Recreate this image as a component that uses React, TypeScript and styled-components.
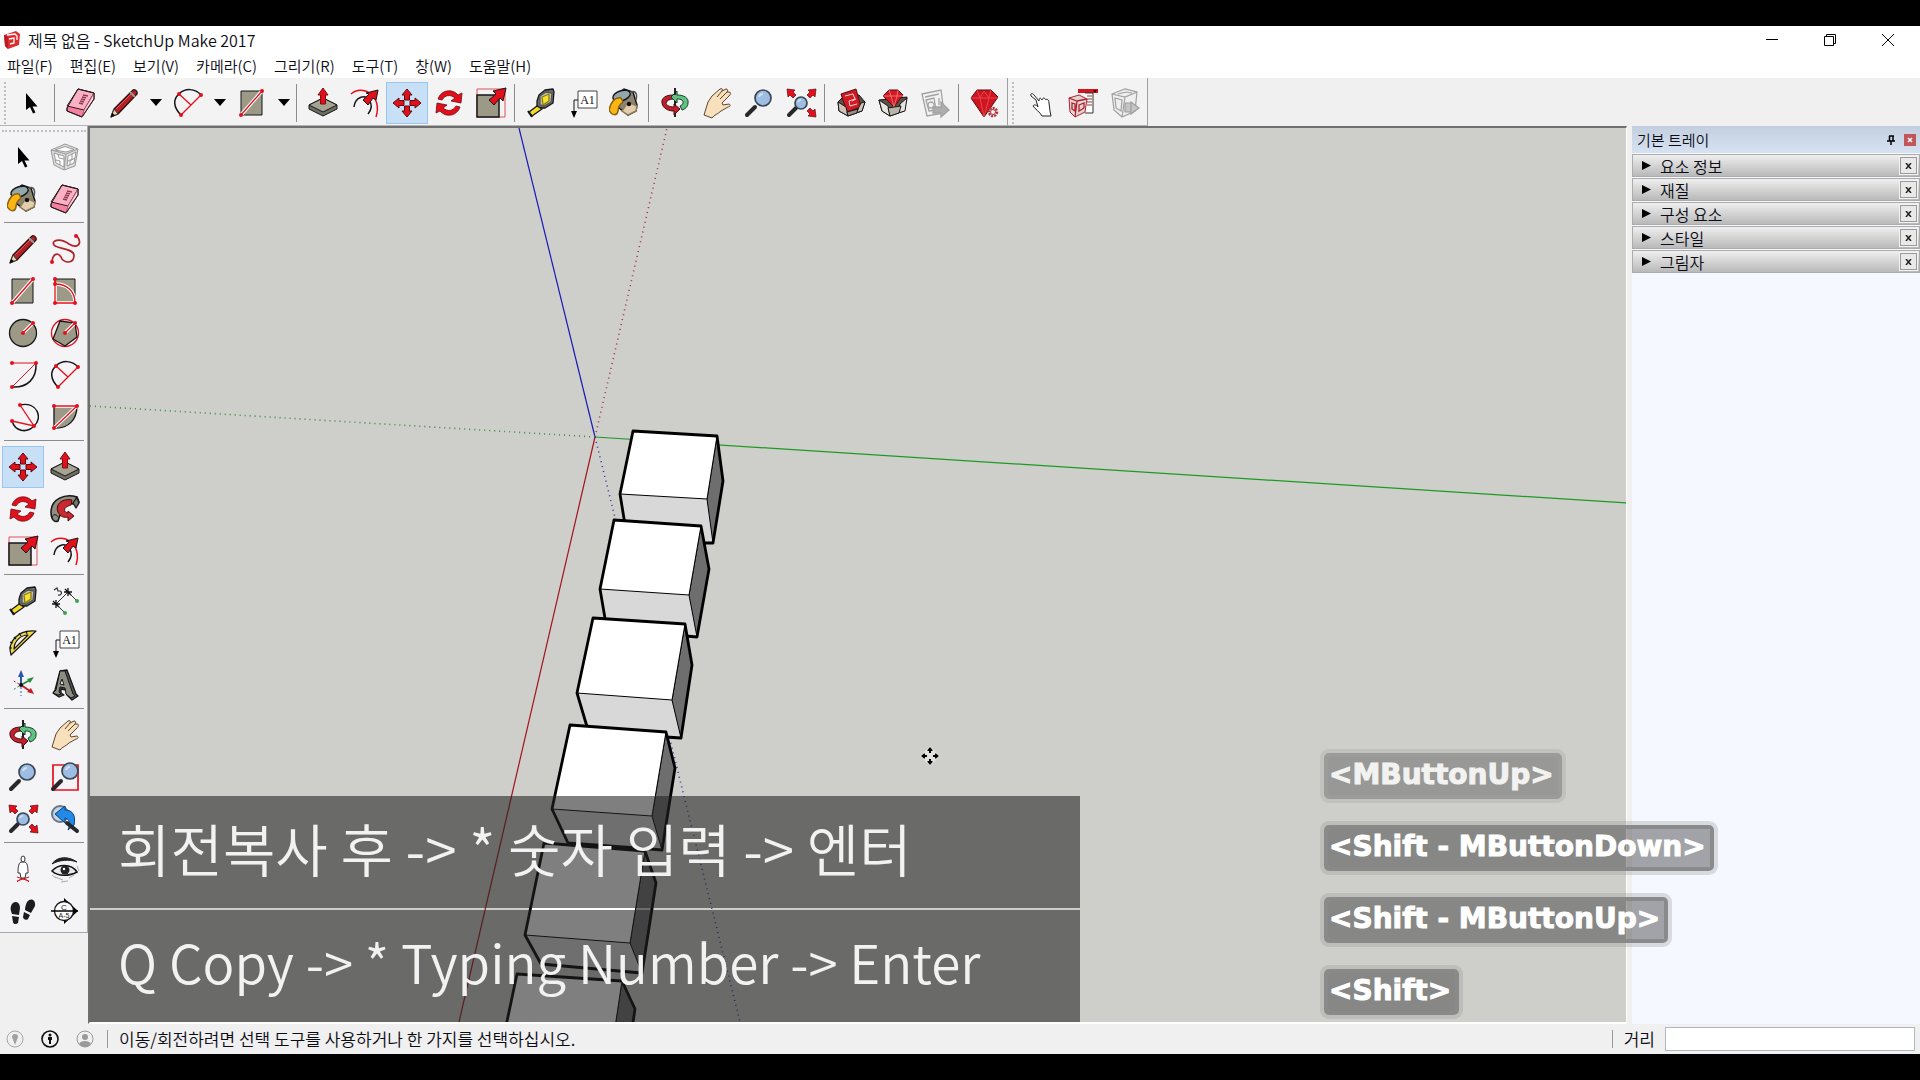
import React from 'react';
import styled, { createGlobalStyle, css } from 'styled-components';

const ui = '"Noto Sans CJK KR", "Noto Sans", sans-serif';
const RED = '#e3101c';
const DARK = '#16161a';
const TAUPE = '#9c9a86';

const Global = createGlobalStyle`
  * { box-sizing: border-box; }
  body { margin: 0; background: #000; font-family: ${ui}; color: #0b0b14; }
  button, input { font: inherit; color: inherit; margin: 0; padding: 0; }
`;

const Screen = styled.div`
  height: 100vh;
  padding: 26px 0;
  background: #000;
  display: flex;
  flex-direction: column;
  overflow: hidden;
  font-weight: 350;
`;
const AppWindow = styled.div`
  flex: 1;
  min-height: 0;
  background: #f0f0f0;
  display: flex;
  flex-direction: column;
`;
const TitleBar = styled.header`
  height: 28px;
  background: #fff;
  display: flex;
  align-items: center;
  padding: 0 3px 0 4px;
  gap: 8px;
`;
const Title = styled.h1`
  margin: 0;
  flex: 1;
  font-size: 16px;
  line-height: 28px;
  font-weight: 350;
`;
const Plain = styled.button`
  border: 0;
  background: transparent;
  display: flex;
  align-items: center;
  justify-content: center;
`;
const WindowButtons = styled.div`
  display: flex;
`;
const WindowButton = styled(Plain)`
  width: 58px;
  height: 28px;
`;
const MenuBar = styled.nav`
  height: 24px;
  background: #fff;
  display: flex;
  align-items: center;
  padding-left: 7px;
  gap: 17px;
`;
const MenuItem = styled(Plain)`
  font-size: 15px;
  line-height: 24px;
`;

const ToolbarRow = styled.div`
  height: 48px;
  display: flex;
`;
const ToolGroup = styled.div`
  display: flex;
  align-items: center;
  padding: 2px 1px 0 4px;
  background: #f3f3f3;
  border-right: 1px solid #a0a0a0;
  border-bottom: 1px solid #b4b4b4;
`;
const Grip = styled.span<{ $flat?: boolean; $roomy?: boolean }>`
  flex: none;
  ${(p) =>
    p.$flat
      ? css`height: 6px; width: 84px; border-top: 2px dotted #c0c0c0;`
      : css`width: ${p.$roomy ? 8 : 6}px; height: 42px; border-left: 2px dotted #c0c0c0;`}
`;
const Tool = styled(Plain)<{ $active?: boolean; $wide?: boolean }>`
  width: ${(p) => (p.$wide ? 44 : 42)}px;
  height: 42px;
  flex: none;
  ${(p) =>
    p.$active &&
    css`
      background: #c8e0f6;
      border: 1px solid #98c8ef;
    `}
`;
const Drop = styled(Plain)`
  width: 20px;
  height: 42px;
`;
const Divider = styled.span<{ $flat?: boolean }>`
  flex: none;
  ${(p) =>
    p.$flat
      ? css`width: 80px; height: 8px; margin: 0 2px; padding: 2px 0;`
      : css`width: 8px; height: 38px; padding: 0 2px;`}
  &::before {
    content: '';
    display: block;
    background: #8c8c8c;
    ${(p) => (p.$flat ? css`height: 1px;` : css`width: 1px; height: 100%;`)}
  }
`;

const Workspace = styled.div`
  flex: 1;
  min-height: 0;
  display: flex;
  position: relative;
`;
const Side = styled.aside`
  width: 88px;
  flex: none;
`;
const Palette = styled.div`
  background: #f4f4f6;
  border-right: 1px solid #a8a8a8;
  border-bottom: 1px solid #a8a8a8;
  padding: 4px 0 0 2px;
  display: flex;
  flex-wrap: wrap;
`;
const Viewport = styled.main`
  flex: 1;
  min-width: 0;
  position: relative;
  background: #cececa;
  border: 2px solid #6e6e6e;
  border-right: 1px solid #fff;
  border-bottom-color: #fff;
  overflow: hidden;
`;
const Scene = styled.svg`
  display: block;
  width: 100%;
  height: 100%;
`;
const Caption = styled.section`
  position: absolute;
  left: 0;
  bottom: 0;
  width: 990px;
  display: grid;
  gap: 2px;
`;
const CaptionLine = styled.p<{ $size: number }>`
  margin: 0;
  height: 112px;
  padding: 0 28px;
  background: rgba(35, 35, 35, 0.58);
  color: #f2f2f2;
  font-size: ${(p) => p.$size}px;
  line-height: 102px;
  font-weight: 350;
  white-space: nowrap;
`;
const Tray = styled.aside`
  width: 293px;
  flex: none;
  background: #f5f8ff;
  border-left: 5px solid #f0f0f0;
`;
const TrayHead = styled.div`
  height: 27px;
  margin-bottom: 1px;
  padding: 0 4px 0 5px;
  display: flex;
  align-items: center;
  gap: 8px;
  background: linear-gradient(#c3cfdf, #d6e2f2);
`;
const TrayTitle = styled.h2`
  margin: 0;
  flex: 1;
  font-size: 15px;
  line-height: 24px;
  font-weight: 350;
`;
const TrayClose = styled(Plain)`
  width: 12px;
  height: 12px;
  background: #c2545a;
`;
const Section = styled.div`
  height: 23px;
  margin-bottom: 1px;
  border: 1px solid #acacac;
  background: linear-gradient(#f0eff0, #b9b9b9);
  display: flex;
  align-items: center;
  padding-right: 2px;
`;
const SectionToggle = styled(Plain)`
  flex: 1;
  justify-content: flex-start;
  gap: 9px;
  padding-left: 9px;
  font-size: 16px;
  line-height: 20px;
`;
const SectionClose = styled(Plain)`
  width: 17px;
  height: 17px;
  background: #e9e9e9;
  border: 1px solid #999;
  outline: 1px solid #f4f4f4;
`;

const Keys = styled.div`
  position: absolute;
  left: calc(100% - 596px);
  bottom: 9px;
  display: flex;
  flex-direction: column;
  align-items: flex-start;
  gap: 26px;
`;
const Key = styled.kbd<{ $faded?: boolean }>`
  height: 46px;
  padding: 0 4px 0 1px;
  border: 4px solid #8a8a8a;
  border-radius: 5px;
  background: rgba(0, 0, 0, 0.34);
  background-clip: padding-box;
  box-shadow: 0 0 0 4px rgba(150, 150, 150, 0.3);
  color: #fff;
  font: bold 28px/36px "DejaVu Sans", sans-serif;
  -webkit-text-stroke: 1px #fff;
  white-space: nowrap;
  opacity: ${(p) => (p.$faded ? 0.75 : 1)};
`;

const StatusBar = styled.footer`
  height: 30px;
  display: flex;
  align-items: center;
  padding: 0 5px 0 6px;
  font-size: 17px;
  line-height: 28px;
`;
const StatusIcons = styled.div`
  display: flex;
  gap: 17px;
  padding-right: 13px;
`;
const StatusText = styled.span`
  flex: 1;
  padding-left: 11px;
  border-left: 1px solid #999;
  line-height: 18px;
`;
const Measure = styled.label`
  border-left: 1px solid #999;
  padding: 0 10px 0 11px;
  line-height: 18px;
`;
const MeasureInput = styled.input`
  width: 250px;
  height: 24px;
  background: #fff;
  border: 1px solid #b0b6c6;
`;

/* ---------- icons, drawn round a centre of 0,0 ---------- */

const Svg = ({ children }: { children: React.ReactNode }) => (
  <svg width={32} height={32} viewBox="-16 -16 32 32" fill="none" aria-hidden="true">
    {children}
  </svg>
);
const Dots = ({ at, fill = RED }: { at: number[][]; fill?: string }) => (
  <>
    {at.map(([x, y]) => (
      <circle key={`${x},${y}`} cx={x} cy={y} r={2} fill={fill} />
    ))}
  </>
);
const Lens = ({ x, y, r }: { x: number; y: number; r: number }) => (
  <>
    <circle cx={x} cy={y} r={r} fill="#9dbde2" stroke="#3a4654" strokeWidth={1.700} />
    <path d={`M${x - r / 2} ${y - 1}a${r / 2} ${r / 2} 0 0 1 ${r / 2} ${-r / 2 + 1}`} stroke="#cfe2f5" strokeWidth={2} />
  </>
);
const Handle = ({ d }: { d: string }) => <path d={d} stroke="#26282c" strokeWidth={4} strokeLinecap="round" />;

const icons: Record<string, React.ReactNode> = {
  select: <path d="M-5-10V7L-1 4L2 10.500L4.500 9.500L1.500 3.500H6.500Z" fill="#000" />,
  component: (
    <g stroke="#9a9a9a" strokeLinejoin="round">
      <path d="M-14-7L0-13L13-8L10 9L-1 13L-11 8Z" fill="#dcdcdc" />
      <path d="M-10-7L0-10.500L9-7.500L1-5Z" fill="#fbfbfb" />
      <path d="M-11-4L-1-1V10L-9 6Z" fill="#fbfbfb" />
      <path d="M3-1L11-5L9 6L2 9Z" fill="#fbfbfb" />
      <path d="M-14-7L1-3L13-8M1-3L-1 13M-7-3L-6 1L-1 2M-9 3L-5 4V8M7-3V2L3 4M5 8V4L10 1" />
    </g>
  ),
  bucket: (
    <g stroke={DARK} strokeWidth={1.500}>
      <path d="M-8-9L-1-14L8-11L12 2L11 8L3 12L-7 4Z" fill="#8b8671" />
      <path d="M3-1L12 3L11 8L3 12L-3 8Z" fill="#e2cfaa" stroke="#8d7c5c" />
      <ellipse cx={-1} cy={-8} rx={9} ry={5} transform="rotate(-18)" fill="#93a8ad" />
      <path d="M5-10C9-14 13-10 11-3" stroke="#555" />
      <path d="M-4-5C-10-6-14-1-16 7C-13 13-8 13-7 8C-7 3-5 1-2-1Z" fill="#fdb515" stroke="#8a6410" />
      <circle cx={4} cy={1} r={1.500} fill="#000" />
    </g>
  ),
  eraser: (
    <g stroke="#2b1b20" strokeLinejoin="round">
      <path d="M-14 5L-3-14L13-10V-4L1 14L-14 8Z" fill="#f77f9f" />
      <path d="M-14 3L-3-14L13-10L3 7Z" fill="#fbb0c4" />
      <path d="M3 7L13-10V-4L1 14Z" fill="#fcd2dc" stroke="#a3566c" />
      <path d="M-2 0L2 1M-1-2L3-1M0-4L4-3M1-6L5-5M2-8L7-7" stroke="#8f3a52" strokeWidth={1.300} />
      <path d="M-14 5L-3-14L13-10V-4L1 14L-14 8Z" />
    </g>
  ),
  pencil: (
    <g strokeLinejoin="round">
      <path d="M-13 14L-10 6L8-12C10-15 14-12 13-9L-6 11Z" fill="#b32025" stroke="#2a1111" strokeWidth={1.300} />
      <path d="M-13 14L-10 6L-6 11Z" fill="#e8d8a8" stroke="#333" />
      <path d="M-13 14L-12 10L-9 12Z" fill="#000" />
      <path d="M-8 6L7-9" stroke="#e4595c" />
      <path d="M6-11L11-6" stroke="#999" strokeWidth={2} />
    </g>
  ),
  freehand: (
    <>
      <path d="M12-13C18-5 12 0 4-5C-6-12-14-8-11-4C-8 0 8-1 9 6C9 16-2 14-4 8C-8 2-13 6-13 14" stroke="#b02329" strokeWidth={1.700} />
      <Dots at={[[11, -13], [-13, 13]]} />
    </>
  ),
  rect: (
    <>
      <path d="M-11-12H10V12H-11Z" fill={TAUPE} stroke={DARK} />
      <path d="M-11 12L10-12" stroke="#fff" strokeWidth={3.500} />
      <path d="M-11 12L10-12" stroke={RED} strokeWidth={1.300} />
      <Dots at={[[-11, 12], [10, -12]]} />
    </>
  ),
  rotrect: (
    <>
      <path d="M-10-12H10V12H-10Z" fill={TAUPE} stroke={DARK} />
      <path d="M-10-7C2-7 10 0 10 12H-10Z" stroke="#fff" strokeWidth={3.500} />
      <path d="M-10-12V12H10C10 0 2-7-10-7" stroke={RED} strokeWidth={1.300} />
      <Dots at={[[-10, -12], [-10, -7], [-10, 12], [10, 12]]} />
    </>
  ),
  circle: (
    <>
      <circle r={13.500} fill={TAUPE} stroke={DARK} strokeWidth={1.300} />
      <path d="M0 0L10-10" stroke="#fff" strokeWidth={3.500} />
      <path d="M0 0L10-10" stroke={RED} strokeWidth={1.300} />
      <Dots at={[[0, 0], [10, -10]]} />
    </>
  ),
  polygon: (
    <>
      <circle r={13.500} stroke={RED} strokeWidth={1.300} />
      <path d="M-5-12L10-10L12 4L0 13L-12 6Z" fill={TAUPE} stroke={DARK} strokeWidth={1.300} />
      <path d="M0 0L10-10" stroke="#fff" strokeWidth={3.500} />
      <path d="M0 0L10-10" stroke={RED} strokeWidth={1.300} />
      <Dots at={[[0, 0], [10, -10]]} />
    </>
  ),
  arc: (
    <>
      <path d="M13-12C14 4 4 13-11 12" stroke={DARK} strokeWidth={1.500} />
      <path d="M-11-12H13L-11 12" stroke={RED} />
      <Dots at={[[-11, -12], [13, -12], [-11, 12]]} />
    </>
  ),
  arc2: (
    <>
      <path d="M-7 12C-15 4-15-4-9-9C-3-15 7-15 13-8" stroke={DARK} strokeWidth={1.500} />
      <path d="M-7 12L13-8M-9-9L3 2" stroke={RED} strokeWidth={1.300} />
      <Dots at={[[-7, 12], [13, -8], [-9, -9]]} />
    </>
  ),
  arc3: (
    <>
      <path d="M-3-12C15-16 20 2 11 9C3 17-8 14-11 4" stroke={DARK} strokeWidth={1.500} />
      <path d="M-3-12L11 9L-11 4" stroke={RED} strokeWidth={1.300} />
      <Dots at={[[-3, -12], [11, 9], [-11, 4]]} />
    </>
  ),
  pie: (
    <>
      <path d="M-11-11H12C12 3 3 12-11 11Z" fill={TAUPE} stroke={DARK} strokeWidth={1.300} />
      <path d="M-11 11L12-11H-11" stroke="#fff" strokeWidth={3.500} />
      <path d="M-11 11L12-11H-11" stroke={RED} strokeWidth={1.300} />
      <Dots at={[[-11, -11], [12, -11], [-11, 11]]} />
    </>
  ),
  move: (
    <g fill={RED} stroke="#5a0a10" strokeLinejoin="round">
      {[0, 90, 180, 270].map((a) => (
        <path key={a} transform={`rotate(${a})`} d="M0-14L5-8H2.500V-3H-2.500V-8H-5Z" />
      ))}
    </g>
  ),
  push: (
    <g stroke={DARK} strokeLinejoin="round">
      <path d="M-14 2L0-5L14 2V6L0 13L-14 6Z" fill="#6f6e61" />
      <path d="M-14 2L0-5L14 2L0 9Z" fill="#a5a391" />
      <path d="M0-15L5-8H2.500V1H-2.500V-8H-5Z" fill={RED} stroke="#7a1016" />
    </g>
  ),
  rotate: (
    <g fill={RED} stroke="#6a0c12" strokeWidth={0.800} strokeLinejoin="round">
      <path d="M-11-4C-8-13 3-15 9-8L13-10L12 0L2-2L6-5C1-9-4-8-7-3Z" />
      <path transform="rotate(180)" d="M-11-4C-8-13 3-15 9-8L13-10L12 0L2-2L6-5C1-9-4-8-7-3Z" />
    </g>
  ),
  follow: (
    <g strokeLinejoin="round">
      <path d="M12-12C0-16-14-10-14 3C-14 10-11 14-7 12L-5 6C-7-3 0-6 10-5L14-7Z" fill="#8f8e80" stroke={DARK} strokeWidth={1.500} />
      <path d="M12-12L14-6L11-1L8-6Z" fill="#77766a" stroke={DARK} strokeWidth={1.300} />
      <path d="M7-9C-4-11-10-4-7 3C-5 8 0 9 3 8V12L9 7L3 2V4C-2 3-2-2 6-4Z" fill="#c92a30" stroke="#4a0a0e" />
      <path d="M-13 8C-12 5-8 5-7 8" stroke={DARK} />
    </g>
  ),
  scale: (
    <>
      <path d="M-14-14H14V14H-14Z" stroke="#e0505a" />
      <path d="M-14-8H8V14H-14Z" fill={TAUPE} stroke={DARK} strokeWidth={1.500} />
      <path d="M15-15L12-2L9-5L3 2L-2-3L5-9L2-12Z" fill={RED} stroke={DARK} />
    </>
  ),
  offset: (
    <>
      <path d="M-14-9C-3-19 18-8 11 14" stroke={RED} strokeWidth={1.500} />
      <path d="M-11 4C-10-6 0-9 4-3C7 1 7 6 3 11" stroke={DARK} strokeWidth={1.500} />
      <path d="M13-13L11-3L8-5L3 2L-2-3L4-9L1-10Z" fill={RED} stroke={DARK} />
    </>
  ),
  tape: (
    <g stroke={DARK} strokeWidth={1.300} strokeLinejoin="round">
      <path d="M-2-8L4-13L12-14L13-11L12 0L4 5H-4L-4-2Z" fill="#6d6d68" />
      <path d="M-1-7L5-11L11-10L10-1L3 3L-1 2Z" fill="#c4c4c0" stroke="#55554f" />
      <path d="M1-6L8-9V-2L2 2Z" fill="#f5e12d" stroke="#8a7a10" />
      <path d="M-4 3L1 6L-9 13L-12 9Z" fill="#f2dc24" />
      <path d="M-13 8L-9 14" strokeWidth={2} />
    </g>
  ),
  dimension: (
    <>
      <path d="M-9 3L3-9M-9 3L0 12M3-9L12 0" stroke="#333" />
      <path d="M-13 3H-5M-12 0L-6 6M-9-1V7M-1-9H7M0-12L6-6M3-13V-5" stroke="#111" strokeWidth={1.300} />
      <path d="M-11-11L-8-13L-7-10L-5-10C-2-9-4-5-7-6" stroke="#333" strokeWidth={1.200} />
      <Dots at={[[0, 12], [12, 0]]} fill="#3fa34a" />
    </>
  ),
  protractor: (
    <g stroke={DARK} strokeWidth={1.200} strokeLinejoin="round">
      <path d="M-12 12C-16 0-6-14 13-12Z" fill="#f0d848" />
      <path d="M-9 6C-9-1-3-8 5-8Z" fill="#f4f4f6" />
      <path d="M-14 5L-11 5M-13-1L-10 0M-9-6L-7-4M-4-10L-2-7M3-12L4-9" />
    </g>
  ),
  text: (
    <>
      <path d="M-5-12H14V5H-5Z" fill="#fff" stroke="#444" />
      <path d="M-5-3H-9V9" stroke={DARK} />
      <path d="M-12 8H-6L-9 15Z" fill="#000" />
      <text x={4.500} y={1} fontSize={12} fontFamily='"Liberation Serif", serif' fontWeight={400} textAnchor="middle" fill="#111">A1</text>
    </>
  ),
  axes: (
    <>
      <path d="M-2 0V-9" stroke="#2a56b0" strokeWidth={2} />
      <path d="M-2-15L1-8H-5Z" fill="#2a56b0" />
      <path d="M-2 0L7-5" stroke="#2e8b3e" strokeWidth={2} />
      <path d="M11-8L7-2L4-6Z" fill="#2e8b3e" />
      <path d="M-2 0L7 6" stroke="#c4202a" strokeWidth={2} />
      <path d="M11 9L4 7L8 3Z" fill="#c4202a" />
      <path d="M-2 2V11" stroke="#2a56b0" strokeDasharray="2 2" />
      <path d="M-4-1L-11-5" stroke="#c4202a" strokeDasharray="2 2" />
      <path d="M-4 1L-10 5" stroke="#2e8b3e" strokeDasharray="2 2" />
      <circle cx={-2} cy={0} r={2} fill="#111" />
    </>
  ),
  text3d: (
    <g stroke={DARK} strokeLinejoin="round">
      <path d="M-5-14L2-15L11 9L13 11L7 15L2 10L1 5L-4 4L-4 8L-1 10L-6 12L-12 8L-10 5Z" fill="#55574e" strokeWidth={1.300} />
      <path d="M-5-14L0-14L8 9L10 11L6 13L1 9L0 3L-5 2L-6 7L-4 9L-7 10L-12 8L-9 5Z" fill="#8b8d80" />
      <path d="M-3-6L-1 0L-5-1Z" fill="#f4f4f6" />
    </g>
  ),
  orbit: (
    <g strokeLinejoin="round">
      <path d="M0-15V14" stroke="#222" strokeWidth={2} />
      <path d="M-2-8C-9-8-14-5-13 0C-12 6-6 8-1 8V12L5 6L-1 1V4C-6 4-9 2-9 0C-8-3-5-4-2-4Z" fill="#c21f2b" stroke="#3d0a10" />
      <path d="M2-12V-8C9-8 14-5 13 0C13 4 10 6 7 7L5 3C8 2 9-1 7-3C5-4 4-4 2-4V0L-4-6Z" fill="#5fc283" stroke="#123d22" />
      <path d="M0-15V-8" stroke="#222" strokeWidth={2} />
    </g>
  ),
  pan: (
    <path
      d="M-13 12L-9-1L-5-7L3-14C5-15 6-14 5-12L9-14C11-14 11-12 10-11L12-11C14-11 14-9 12-7L5 0L6 2L12 1C14 2 13 4 11 4L4 8C1 11-3 12-5 15ZM5-12L0-6M10-11L3-4"
      fill="#f7e0bb"
      stroke="#5b4630"
      strokeLinejoin="round"
    />
  ),
  zoom: (
    <>
      <Handle d="M-12 12L-4 4" />
      <Lens x={4} y={-5} r={8} />
    </>
  ),
  zoomwin: (
    <>
      <path d="M-12-12H13V13H-12Z" stroke={RED} strokeWidth={1.700} />
      <Handle d="M-12 12L-4 4" />
      <Lens x={5} y={-6} r={8} />
    </>
  ),
  extents: (
    <>
      <g fill={RED} stroke="#5a0a10" strokeWidth={0.700}>
        <path d="M-14-14L-6-13L-8-11L-5-8L-8-5L-11-8L-13-6Z" />
        <path d="M15-14L7-13L9-11L6-8L9-5L12-8L14-6Z" />
        <path d="M15 14L7 13L9 11L6 8L9 5L12 8L14 6Z" />
      </g>
      <Handle d="M-12 12L-5 5" />
      <Lens x={0} y={0} r={6} />
    </>
  ),
  previous: (
    <>
      <circle cx={-5} cy={-5} r={8} fill="#c4d4e4" stroke="#66788a" strokeWidth={2} />
      <path d="M-10-5L0-13V-9C8-9 11-3 9 6L3 11C6 4 4 0 0-1V4Z" fill="#2289e6" stroke="#0d3f78" />
      <Handle d="M2 4L12 12" />
    </>
  ),
  camera: (
    <>
      <path d="M-6 13L0 8L6 13M-6 8L6 12M6 8L-6 12" stroke={RED} />
      <path d="M-2-7C-5-6-5 1-5 4L-3 4L-2 9H2L3 4L5 4C5 1 5-6 2-7Z" fill="#fff" stroke="#333" />
      <ellipse cx={0} cy={-10} rx={2} ry={3} fill="#fff" stroke="#333" />
    </>
  ),
  look: (
    <>
      <path d="M-13-5C-8-13 4-13 12-7C4-10-6-9-13-5Z" fill="#222" stroke="#222" />
      <path d="M-13 2C-7-5 6-6 12 3C5 7-7 8-13 2Z" fill="#e9e9e9" stroke="#111" strokeWidth={1.500} />
      <circle cx={0} cy={1} r={4.500} fill="#222" />
      <circle cx={-1} cy={0} r={1.200} fill="#fff" />
      <path d="M-10 8L-2 11M4 9L9 6M-4 13L3 12M12-3L14 2M-13 6L-9 9" stroke="#aaa" />
    </>
  ),
  walk: (
    <g fill="#1c1c1e">
      <path d="M-12-5C-10-11-3-10-3-3L-4 4L-11 3C-12 0-13-2-12-5ZM-11 5L-4 6L-5 12C-7 14-10 13-10 11Z" />
      <path d="M4-9C8-14 13-11 12-5L8 2L2-1C2-4 3-7 4-9ZM1 1L7 4L5 8C3 10 0 8 0 6Z" />
    </g>
  ),
  section: (
    <>
      <path d="M-1-13L13 0L-1 13Z" fill="#000" />
      <circle r={9.500} cx={-1} fill="#fff" stroke={DARK} strokeWidth={1.300} />
      <path d="M-14 0H13" stroke="#000" strokeWidth={1.500} />
      <text x={-1} y={-1} fontSize={8} fontFamily='"Liberation Sans", sans-serif' textAnchor="middle" fill="#222">C</text>
      <text x={-1} y={7} fontSize={7} fontFamily='"Liberation Sans", sans-serif' textAnchor="middle" fill="#222">A-5</text>
    </>
  ),
  warehouse: (
    <g strokeLinejoin="round">
      <path d="M-13-1L-8-6L8-8L14-1L11 8L-3 13L-12 8Z" fill="#5b5247" stroke={DARK} />
      <path d="M-10-9L5-14L10 4L-4 9Z" fill="#d01a24" stroke="#5a0a10" />
      <path d="M-6-7L2-9L4-4L-2-2L-1 3L6 1M1-2L5-4" stroke="#f7d4d4" />
      <path d="M-13-1L-5 4L-3 13L-12 8ZM10 0L14-1L11 8L5 10Z" fill="#cfc3b6" stroke={DARK} />
      <path d="M-4 9L7 6L6 10L-3 13Z" fill="#9a8c7e" stroke={DARK} />
    </g>
  ),
  extension: (
    <g strokeLinejoin="round">
      <path d="M-14-3L14-6L11 8L-3 13L-11 8Z" fill="#5b5247" stroke={DARK} />
      <path d="M-10-7L-4-13H5L10-8L1 4Z" fill="#d01a24" stroke="#5a0a10" />
      <path d="M-10-7H10M-4-13L-2-7L1 4L4-7L5-13" stroke="#f46c72" />
      <path d="M-14-3L-5 3L-3 13L-11 8ZM7 1L14-5L12 8L5 10Z" fill="#e8e4de" stroke={DARK} />
      <path d="M-5 5L8 3L6 10L-3 13Z" fill="#b9b2a8" stroke={DARK} />
    </g>
  ),
  send: (
    <g stroke="#a2a2a2" strokeWidth={1.300}>
      <path d="M-13-9L6-13L9 10L-8 13Z" fill="#f2f2f2" />
      <path d="M-10-6L4-9M-9-3L-1-5L1 7L-6 8ZM4-5V2" />
      <circle cx={-4} cy={2} r={3} />
      <path d="M-2 4H6V-1L14 7L6 14V10H-2Z" fill="#adadad" />
    </g>
  ),
  ruby: (
    <>
      <path d="M-14-5L-8-13H6L13-6L-1 14Z" fill="#cf1620" stroke="#5a0a10" />
      <path d="M-14-5H13M-8-13L-5-5L-1 14L4-5L6-13M-5-5L-1-12L4-5" stroke="#e5444c" />
      <circle cx={8} cy={9} r={4} fill="#f3f3f3" stroke="#b0303a" strokeWidth={2.500} strokeDasharray="2 1" />
      <circle cx={8} cy={9} r={2.500} stroke="#b0303a" />
    </>
  ),
  pointer: (
    <path
      d="M-10-7C-11-10-8-10-7-8L-2-2C-2-6 0-5 1-3C2-6 4-5 5-3C6-5 8-3 8 0L9 8L10 13H1C-1 9-6 6-8 3C-7 1-4 2-3 4L-5-3Z"
      fill="#fff"
      stroke="#222"
      strokeLinejoin="round"
    />
  ),
  dynamic: (
    <g>
      <path d="M-5-14H15V-10H-5Z" fill="#d3151f" />
      <path d="M2-10H10V10H2" fill="#fff" stroke="#333" />
      <path d="M4-7H9M4-4H9M4-1H9M4 2H9" stroke="#8a3a3a" />
      <path d="M10-13H14L12-10Z" fill="#400" />
      <path d="M-14-5L-4-8L4-4L2 9L-8 14L-13 9Z" fill="#e2d4d2" stroke="#b0222b" />
      <path d="M-14-5L-6-2L4-4M-6-2L-8 14M-11 0L-8 1V8L-11 6ZM-4 2L1 0V5L-4 8Z" stroke="#b0222b" strokeWidth={1.300} />
    </g>
  ),
  attributes: (
    <g stroke="#a0a0a0" strokeWidth={1.200}>
      <path d="M-13-9L0-14L12-11L10 8L-3 14L-11 7Z" fill="#efefef" />
      <path d="M-13-9L0-6L12-11M0-6L-3 14M-10-5L-3-3L-4 8L-9 5ZM-7-9L1-11L7-10" />
      <path d="M0 0H6V9H0ZM6-1L14 5L6 11Z" fill="#c4c4c4" />
    </g>
  ),
};

type ToolDef = { id: string; label: string; drop?: boolean };
const t = (id: string, label: string, drop = false): ToolDef => ({ id, label, drop });

const mainTools: ToolDef[][] = [
  [t('select', '선택')],
  [t('eraser', '지우기'), t('pencil', '선', true), t('arc2', '호', true), t('rect', '직사각형', true)],
  [t('push', '밀기/끌기'), t('offset', '오프셋'), t('move', '이동'), t('rotate', '회전'), t('scale', '배율')],
  [t('tape', '줄자'), t('text', '텍스트'), t('bucket', '페인트통')],
  [t('orbit', '궤도'), t('pan', '이동 보기'), t('zoom', '확대/축소'), t('extents', '범위 확대')],
  [t('warehouse', '3D Warehouse'), t('extension', 'Extension Warehouse'), t('send', '보내기')],
  [t('ruby', '확장 프로그램 관리자')],
];
const dynamicTools = [t('pointer', '상호 작용'), t('dynamic', '구성 요소 옵션'), t('attributes', '구성 요소 속성')];
const paletteTools: ToolDef[][] = [
  [t('select', '선택'), t('component', '구성 요소 만들기'), t('bucket', '페인트통'), t('eraser', '지우기')],
  [
    t('pencil', '선'), t('freehand', '자유곡선'), t('rect', '직사각형'), t('rotrect', '회전된 직사각형'), t('circle', '원'),
    t('polygon', '다각형'), t('arc', '호'), t('arc2', '2점 호'), t('arc3', '3점 호'), t('pie', '파이'),
  ],
  [t('move', '이동'), t('push', '밀기/끌기'), t('rotate', '회전'), t('follow', '따라가기'), t('scale', '배율'), t('offset', '오프셋')],
  [t('tape', '줄자'), t('dimension', '치수'), t('protractor', '각도기'), t('text', '텍스트'), t('axes', '축'), t('text3d', '3D 텍스트')],
  [t('orbit', '궤도'), t('pan', '이동 보기'), t('zoom', '확대/축소'), t('zoomwin', '창 확대'), t('extents', '범위 확대'), t('previous', '이전')],
  [t('camera', '카메라 배치'), t('look', '둘러보기'), t('walk', '걷기'), t('section', '단면')],
];

const ToolButton = ({ tool }: { tool: ToolDef }) => (
  <>
    <Tool type="button" aria-label={tool.label} $active={tool.id === 'move'} $wide={tool.drop}>
      <Svg>{icons[tool.id]}</Svg>
    </Tool>
    {tool.drop && (
      <Drop type="button" aria-label={`${tool.label} 더 보기`}>
        <svg width="12" height="7" aria-hidden="true">
          <path d="M0 0H12L6 7Z" fill="#000" />
        </svg>
      </Drop>
    )}
  </>
);

const ToolSet = ({ groups, flat }: { groups: ToolDef[][]; flat?: boolean }) => (
  <>
    {groups.map((group, i) => (
      <React.Fragment key={group[0].id}>
        {i > 0 && <Divider $flat={flat} />}
        {group.map((tool) => (
          <ToolButton key={tool.id} tool={tool} />
        ))}
      </React.Fragment>
    ))}
  </>
);

/* Each cube: back-left, back-right, right corner, bottom-right, bottom, bottom-left, front-left, front-right */
const cubes = [
  [[633, 431], [717, 436], [723, 481], [713, 543], [703, 543], [627, 537], [620, 494], [707, 499]],
  [[614, 520], [701, 526], [709, 569], [697, 637], [686, 636], [607, 630], [600, 589], [689, 595]],
  [[593, 618], [685, 624], [692, 665], [681, 738], [666, 737], [588, 730], [577, 693], [672, 700]],
  [[570, 725], [666, 732], [675, 768], [662, 850], [650, 849], [568, 843], [552, 809], [652, 816]],
  [[544, 843], [645, 851], [656, 883], [642, 973], [630, 972], [541, 964], [525, 935], [630, 943]],
  [[517, 974], [622, 981], [635, 1009], [620, 1110], [606, 1110], [510, 1100], [495, 1078], [606, 1087]],
];
const pts = (c: number[][], order: number[]) => order.map((i) => c[i].join(',')).join(' ');

const Model = () => (
  <Scene viewBox="90 128 1537 894" preserveAspectRatio="xMinYMin slice" role="img" aria-label="모델">
    <g fill="none" strokeWidth={1.200}>
      <path d="M595 437L519 128" stroke="#1a1ab8" />
      <path d="M595 437L1627 503" stroke="#1e9a24" />
      <path d="M595 437L459 1022" stroke="#a3141c" />
      <path d="M595 437L667 128" stroke="#a03048" strokeDasharray="1 4" strokeWidth={1.600} />
      <path d="M595 437L90 406" stroke="#3d8a46" strokeDasharray="1 4" strokeWidth={1.600} />
      <path d="M595 437L740 1022" stroke="#3333a8" strokeDasharray="1 4" strokeWidth={1.600} />
    </g>
    {cubes.map((c) => (
      <g key={c[0].join()} stroke="#000" strokeLinejoin="round">
        <polygon points={pts(c, [6, 7, 3, 4, 5])} fill="#d8d8d8" stroke="none" />
        <polygon points={pts(c, [1, 2, 3, 7])} fill="#6e6e6e" />
        <polygon points={pts(c, [0, 1, 7, 6])} fill="#fff" />
        <polygon points={pts(c, [0, 1, 2, 3, 4, 5, 6])} fill="none" strokeWidth={2.800} />
      </g>
    ))}
    <g transform="translate(930 756)">
      <path d="M0-10L10 0L0 10L-10 0Z" fill="#e2e2e0" />
      {[0, 90, 180, 270].map((a) => (
        <path key={a} transform={`rotate(${a})`} d="M0-9L2.500-6V-5H1V-3H-1V-5H-2.500V-6Z" fill="#000" />
      ))}
    </g>
  </Scene>
);

const menus = ['파일(F)', '편집(E)', '보기(V)', '카메라(C)', '그리기(R)', '도구(T)', '창(W)', '도움말(H)'];
const sections = ['요소 정보', '재질', '구성 요소', '스타일', '그림자'];
const keys = ['<MButtonUp>', '<Shift - MButtonDown>', '<Shift - MButtonUp>', '<Shift>'];
const windowControls = [
  ['최소화', 'M0 5.500H12'],
  ['이전 크기로', 'M0.500 2.500H9.500V11.500H0.500ZM2.500 2.500V0.500H11.500V9.500H9.500'],
  ['닫기', 'M0 0L12 12M12 0L0 12'],
];

export default function App() {
  return (
    <Screen>
      <Global />
      <AppWindow>
        <TitleBar>
          <svg width="16" height="18" viewBox="0 0 16 18" aria-hidden="true">
            <path d="M0 4L12 0L16 3L15 14L4 18L1 15Z" fill="#e02b31" />
            <path d="M0 4L4 6V18L1 15Z" fill="#b91d24" />
            <path d="M3 4L11 3L13 5V9M5 8L10 7V12L6 13" stroke="#fff" strokeWidth="1.300" fill="none" />
          </svg>
          <Title>제목 없음 - SketchUp Make 2017</Title>
          <WindowButtons>
            {windowControls.map(([label, d]) => (
              <WindowButton key={label} type="button" aria-label={label}>
                <svg width="12" height="12" fill="none" aria-hidden="true">
                  <path d={d} stroke="#000" />
                </svg>
              </WindowButton>
            ))}
          </WindowButtons>
        </TitleBar>
        <MenuBar>
          {menus.map((m) => (
            <MenuItem key={m} type="button">{m}</MenuItem>
          ))}
        </MenuBar>
        <ToolbarRow>
          <ToolGroup>
            <Grip />
            <ToolSet groups={mainTools} />
          </ToolGroup>
          <ToolGroup>
            <Grip $roomy />
            <ToolSet groups={[dynamicTools]} />
          </ToolGroup>
        </ToolbarRow>
        <Workspace>
          <Side>
            <Palette>
              <Grip $flat />
              <ToolSet groups={paletteTools} flat />
            </Palette>
          </Side>
          <Viewport>
            <Model />
            <Caption>
              <CaptionLine $size={57}>회전복사 후 -&gt; * 숫자 입력 -&gt; 엔터</CaptionLine>
              <CaptionLine $size={53}>Q Copy -&gt; * Typing Number -&gt; Enter</CaptionLine>
            </Caption>
          </Viewport>
          <Tray>
            <TrayHead>
              <TrayTitle>기본 트레이</TrayTitle>
              <Plain type="button" aria-label="고정">
                <svg width="9" height="10" aria-hidden="true">
                  <path d="M2.500 1V6M6 1V6M2 1H7M0 6H8M4 6V10" stroke="#000" strokeWidth="1.500" fill="none" />
                </svg>
              </Plain>
              <TrayClose type="button" aria-label="트레이 닫기">
                <svg width="6" height="6" aria-hidden="true">
                  <path d="M1 1L5 5M5 1L1 5" stroke="#fff" strokeWidth="1.500" />
                </svg>
              </TrayClose>
            </TrayHead>
            {sections.map((s) => (
              <Section key={s}>
                <SectionToggle type="button">
                  <svg width="9" height="9" aria-hidden="true">
                    <path d="M0 0L9 4.500L0 9Z" fill="#000" />
                  </svg>
                  {s}
                </SectionToggle>
                <SectionClose type="button" aria-label={`${s} 닫기`}>
                  <svg width="7" height="6" aria-hidden="true">
                    <path d="M1 0L6 6M6 0L1 6" stroke="#222" strokeWidth="1.500" />
                  </svg>
                </SectionClose>
              </Section>
            ))}
          </Tray>
          <Keys>
            {keys.map((k, i) => (
              <Key key={k} $faded={i === 0}>{k}</Key>
            ))}
          </Keys>
        </Workspace>
        <StatusBar>
          <StatusIcons>
            <svg width="18" height="18" viewBox="0 0 18 18" fill="none" aria-hidden="true">
              <circle cx="9" cy="9" r="8" stroke="#a6a6a6" />
              <path d="M9 15L6 7A3 3 0 1 1 12 7Z" fill="#a0a0a0" />
            </svg>
            <svg width="18" height="18" viewBox="0 0 18 18" fill="none" aria-hidden="true">
              <circle cx="9" cy="9" r="8" stroke="#111" strokeWidth="1.600" />
              <circle cx="9" cy="5" r="1.500" fill="#111" />
              <path d="M7 7H11V10H10V14H8V10H7Z" fill="#111" />
            </svg>
            <svg width="18" height="18" viewBox="0 0 18 18" fill="none" aria-hidden="true">
              <circle cx="9" cy="9" r="8" stroke="#9a9a9a" />
              <circle cx="9" cy="7" r="3" fill="#9a9a9a" />
              <path d="M3 14C4 10 14 10 15 14C12 18 6 18 3 14Z" fill="#9a9a9a" />
            </svg>
          </StatusIcons>
          <StatusText>이동/회전하려면 선택 도구를 사용하거나 한 가지를 선택하십시오.</StatusText>
          <Measure htmlFor="measure">거리</Measure>
          <MeasureInput id="measure" type="text" />
        </StatusBar>
      </AppWindow>
    </Screen>
  );
}
